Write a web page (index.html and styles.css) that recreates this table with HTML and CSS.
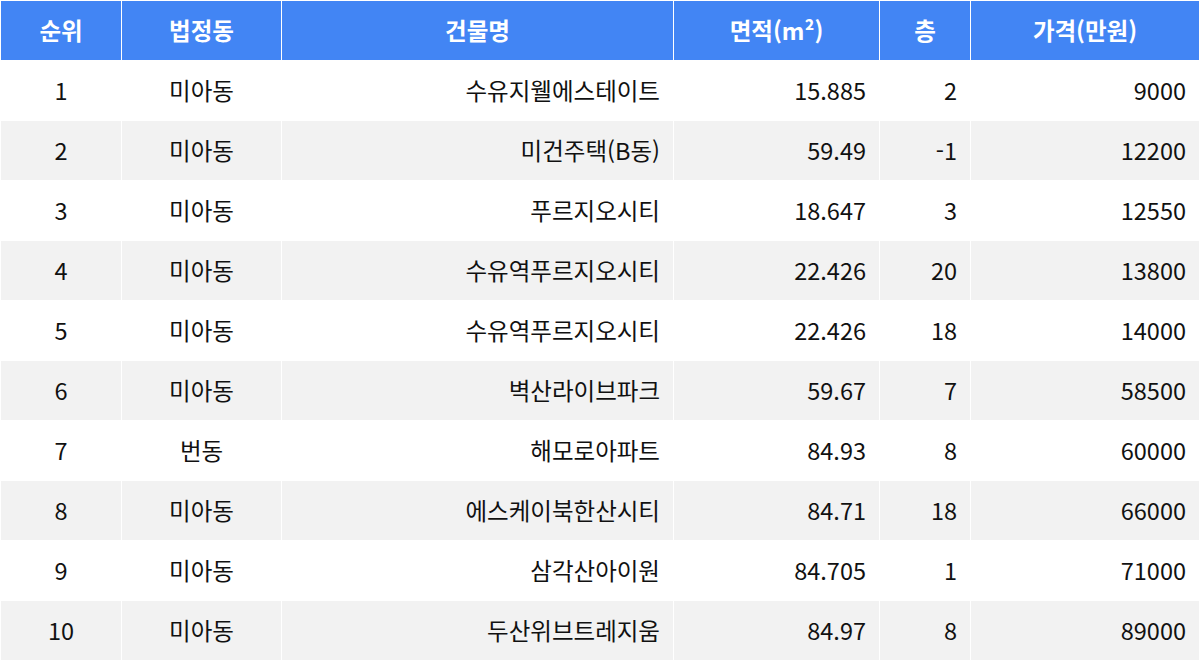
FILE: index.html
```html
<!DOCTYPE html>
<html lang="ko">
<head>
<meta charset="utf-8">
<link rel="stylesheet" href="styles.css">
</head>
<body>
<table class="rank">
  <colgroup>
    <col class="c1"><col class="c2"><col class="c3"><col class="c4"><col class="c5"><col class="c6">
  </colgroup>
  <thead>
    <tr><th>순위</th><th>법정동</th><th>건물명</th><th>면적(m²)</th><th>층</th><th>가격(만원)</th></tr>
  </thead>
  <tbody>
    <tr><td>1</td><td>미아동</td><td class="r">수유지웰에스테이트</td><td class="r">15.885</td><td class="r">2</td><td class="r">9000</td></tr>
    <tr><td>2</td><td>미아동</td><td class="r">미건주택(B동)</td><td class="r">59.49</td><td class="r">-1</td><td class="r">12200</td></tr>
    <tr><td>3</td><td>미아동</td><td class="r">푸르지오시티</td><td class="r">18.647</td><td class="r">3</td><td class="r">12550</td></tr>
    <tr><td>4</td><td>미아동</td><td class="r">수유역푸르지오시티</td><td class="r">22.426</td><td class="r">20</td><td class="r">13800</td></tr>
    <tr><td>5</td><td>미아동</td><td class="r">수유역푸르지오시티</td><td class="r">22.426</td><td class="r">18</td><td class="r">14000</td></tr>
    <tr><td>6</td><td>미아동</td><td class="r">벽산라이브파크</td><td class="r">59.67</td><td class="r">7</td><td class="r">58500</td></tr>
    <tr><td>7</td><td>번동</td><td class="r">해모로아파트</td><td class="r">84.93</td><td class="r">8</td><td class="r">60000</td></tr>
    <tr><td>8</td><td>미아동</td><td class="r">에스케이북한산시티</td><td class="r">84.71</td><td class="r">18</td><td class="r">66000</td></tr>
    <tr><td>9</td><td>미아동</td><td class="r">삼각산아이원</td><td class="r">84.705</td><td class="r">1</td><td class="r">71000</td></tr>
    <tr><td>10</td><td>미아동</td><td class="r">두산위브트레지움</td><td class="r">84.97</td><td class="r">8</td><td class="r">89000</td></tr>
  </tbody>
</table>
</body>
</html>
```

FILE: styles.css
```css
html, body {
  margin: 0;
  padding: 0;
  background: #ffffff;
}
body {
  font-family: "Noto Sans CJK KR", "Noto Sans", sans-serif;
  color: #111111;
}
.rank {
  width: 1200px;
  border-collapse: separate;
  border-spacing: 1px;
  table-layout: fixed;
  background: #ffffff;
}
.c1 { width: 120px; }
.c2 { width: 159px; }
.c3 { width: 391px; }
.c4 { width: 205px; }
.c5 { width: 90px; }
.c6 { width: 228px; }
.rank th,
.rank td {
  height: 59px;
  padding: 0 13px;
  font-size: 23.5px;
  text-align: center;
  vertical-align: middle;
  box-sizing: border-box;
  line-height: 1;
}
.rank th {
  background: #4285f4;
  color: #ffffff;
  font-weight: 700;
}
.rank td.r {
  text-align: right;
}
.rank tbody tr:nth-child(even) td {
  background: #f2f2f2;
}
```
